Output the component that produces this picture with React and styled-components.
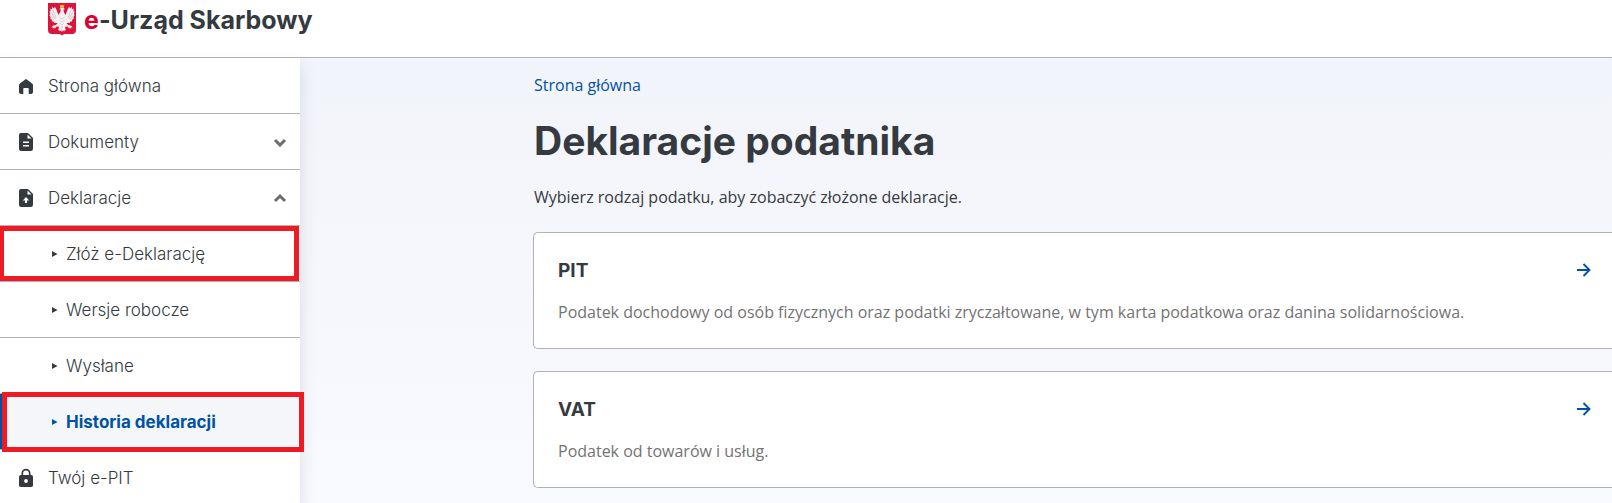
import React from "react";
import styled, { createGlobalStyle } from "styled-components";

const GlobalStyle = createGlobalStyle`
  * {
    box-sizing: border-box;
  }
  body {
    margin: 0;
    background-color: #f8faff;
    color: #343a40;
    font-family: "Open Sans", sans-serif;
    font-size: 16px;
    line-height: 24px;
    overflow-x: hidden;
  }
`;

const Header = styled.header`
  display: flex;
  align-items: flex-start;
  height: 58px;
  padding: 3px 48px;
  background-color: white;
  border-bottom: 1px solid #b3b3b3;
`;

const Brand = styled.a`
  display: flex;
  gap: 8px;
  color: #343a40;
  font-family: Inter, sans-serif;
  font-size: 25px;
  font-weight: 700;
  line-height: 34px;
  text-decoration: none;
`;

const BrandAccent = styled.span`
  color: #dc0032;
`;

const Layout = styled.div`
  display: flex;
  min-height: calc(100vh - 58px);
`;

const Sidebar = styled.nav`
  position: relative;
  flex: 0 0 300px;
  background-color: white;
  box-shadow: 0 8px 16px rgba(52, 58, 64, 0.14);
`;

const List = styled.ul`
  list-style: none;
  margin: 0;
  padding: 0;
`;

const Item = styled.li`
  position: relative;
  z-index: ${(props) => (props.$marked ? 1 : 0)};
  border-bottom: 1px solid #b3b3b3;
`;

const NavLink = styled.a`
  display: flex;
  align-items: center;
  gap: 11px;
  height: 55px;
  padding: 0 13px 0 15px;
  color: #343a40;
  font-family: Inter, sans-serif;
  font-size: 17px;
  font-weight: 300;
  text-decoration: none;
`;

const NavButton = styled(NavLink)`
  width: 100%;
  border: none;
  background: none;
  text-align: left;
  cursor: pointer;
`;

const SubLink = styled(NavLink)`
  gap: 6px;
  padding: 0 14px 0 ${(props) => (props.$active ? "42px" : "48px")};
  border-left: ${(props) => (props.$active ? "6px solid #0052a5" : "none")};
  background-color: ${(props) => (props.$active ? "#f5f6fa" : "white")};
  color: ${(props) => (props.$active ? "#0052a5" : "#343a40")};
  font-weight: ${(props) => (props.$active ? 700 : 300)};
`;

const NavLabel = styled.span`
  flex: 1;
`;

const Frame = styled.span`
  position: absolute;
  inset: ${(props) => props.$inset};
  border: 5px solid #ed1c24;
  pointer-events: none;
`;

const Main = styled.main`
  display: flex;
  flex: 1;
  flex-direction: column;
  gap: 22px;
  min-width: 0;
  padding: 15px 0 15px 233px;
  background: linear-gradient(#f1f4fa, #f5f6fb 160px, #f8faff);
`;

const Intro = styled.div`
  display: flex;
  flex-direction: column;
  gap: 22px;
  padding: 0 1px 1px;
`;

const Breadcrumb = styled.a`
  align-self: flex-start;
  color: #0052a5;
  text-decoration: none;
`;

const Title = styled.h1`
  margin: 0;
  font-family: Inter, sans-serif;
  font-size: 39px;
  font-weight: 700;
  line-height: 44px;
`;

const Lead = styled.p`
  margin: 0;
`;

const Card = styled.a`
  display: flex;
  justify-content: space-between;
  padding: 24px 17px 24px 24px;
  background-color: white;
  border: 1px solid #b3b3b3;
  border-right: none;
  border-radius: 5px 0 0 5px;
  color: #737373;
  text-decoration: none;
`;

const CardBody = styled.div`
  display: flex;
  flex-direction: column;
  gap: 16px;
`;

const CardTitle = styled.h2`
  margin: 0;
  color: #343a40;
  font-family: Inter, sans-serif;
  font-size: 19px;
  font-weight: 700;
  line-height: 27px;
`;

const CardText = styled.p`
  margin: 0;
`;

const Emblem = () => (
  <svg width="28" height="33" viewBox="0 0 28 33" aria-hidden="true">
    <path
      d="M0 0h28v27q0 4-4 4h-7q-2 0-3 1.6Q13 31 11 31H4q-4 0-4-4z"
      fill="#dc143c"
    />
    <g fill="#f6f1f2">
      <path d="M12 5.5q1.500-1.600 3.800-.7l1 1.500-1.400.2.6 3 1.600 2.500 2-5.400 1.500-2.800 1 2 1.400-2 .6 2.400 1.600-.7-.3 2.700 1.200.3-.8 2.500.8 1-1.200 2.200.4 1.400-1.600 1.200-.2 1.400-1.700.5-.5 1.300-1.800-.3-1.600.8 2 1.600 2.800.7 1.400 2-1.600-.6.2 1.500-1.500-1.100-.5 1.200-1.200-1.700-2.300-.8-.6 1.600 1 2.400-1.400-.3-.4 1.400-1.200-1.100-1.100 1.700-1.100-1.700-1.200 1.100-.4-1.400-1.400.3 1-2.400-.6-1.600-2.300.8-1.200 1.700-.5-1.200-1.500 1.100.2-1.500-1.600.6 1.400-2 2.800-.7 2-1.600-1.600-.8-1.800.3-.5-1.300-1.700-.5-.2-1.400-1.600-1.200.4-1.400-1.200-2.200.8-1-.8-2.500 1.200-.3-.3-2.700 1.600.7.6-2.400 1.400 2 1-2 1.500 2.800 2 5.400 1.600-2.500.8-2.500z" />
    </g>
    <g fill="none" stroke="#b9a5ac" strokeWidth=".5">
      <path d="M5 7l3 8M3.300 9l3.600 7M3 12.500l3 4.500M23 7l-3 8M24.700 9l-3.600 7M25 12.500L22 17M11.500 14l2.500 2 2.500-2M11.500 17l2.500 2 2.500-2M12 20l2 2 2-2M14 23v5" />
    </g>
    <g fill="#efc431">
      <path d="M11.700 1.600l1.100 1 1.200-1.200 1.200 1.200 1.100-1-.5 3.100h-3.600zM11 6l1.500-.4.1 1.200zM7.500 23l1.800-.5-.8 1.800zM20.500 23l-1.800-.5.8 1.800z" />
    </g>
  </svg>
);

const HomeIcon = () => (
  <svg width="22" height="22" viewBox="0 0 22 22" aria-hidden="true">
    <path
      d="M10.200 4.400q.8-.6 1.600 0l5.300 4q.9.7.9 1.700V17q0 2-2 2h-2.300v-5.300q0-.7-.7-.7H9q-.7 0-.7.700V19H6q-2 0-2-2v-6.900q0-1 .9-1.700z"
      fill="#343a40"
    />
  </svg>
);

const DocumentIcon = () => (
  <svg width="22" height="22" viewBox="0 0 22 22" aria-hidden="true">
    <path d="M6 2h7l5 5v10.500Q18 20 16 20H6q-2 0-2-2V4q0-2 2-2z" fill="#343a40" />
    <path d="M12.500 3.500V7.500h4zM8 10.500h6v1.500H8zM8 14h6v1.500H8z" fill="white" />
  </svg>
);

const UploadIcon = () => (
  <svg width="22" height="22" viewBox="0 0 22 22" aria-hidden="true">
    <path d="M6 2h7l5 5v10.500Q18 20 16 20H6q-2 0-2-2V4q0-2 2-2z" fill="#343a40" />
    <path
      d="M12.500 3.500V7.500h4zM11 10l3.200 3.500h-2.200V16h-2v-2.500H7.800z"
      fill="white"
    />
  </svg>
);

const LockIcon = () => (
  <svg width="22" height="22" viewBox="0 0 22 22" aria-hidden="true">
    <path d="M7.300 9V6.300a3.700 3.700 0 0 1 7.400 0V9" fill="none" stroke="#343a40" strokeWidth="1.700" />
    <rect x="4" y="8" width="14" height="12" rx="1.800" fill="#343a40" />
    <circle cx="11" cy="14" r="1.900" fill="white" />
  </svg>
);

const Chevron = ({ open }) => (
  <svg width="14" height="10" viewBox="0 0 14 10" aria-hidden="true">
    <path
      d={open ? "M2 8l5-5 5 5" : "M2 3l5 5 5-5"}
      fill="none"
      stroke="#6c6c6c"
      strokeWidth="3"
    />
  </svg>
);

const Triangle = () => (
  <svg width="12" height="8" viewBox="0 0 12 8" aria-hidden="true">
    <path d="M4 1l5.500 3L4 7z" fill="currentColor" />
  </svg>
);

const Arrow = () => (
  <svg width="20" height="26" viewBox="0 0 20 26" aria-hidden="true">
    <path d="M2 13h12M8.500 7l6 6-6 6" fill="none" stroke="#0052a5" strokeWidth="1.900" />
  </svg>
);

const submenu = [
  { label: "Złóż e-Deklarację", frame: "0 1px 0 -1px" },
  { label: "Wersje robocze" },
  { label: "Wysłane" },
  { label: "Historia deklaracji", frame: "-2px -4px -3px 2px", active: true },
];

const taxes = [
  {
    name: "PIT",
    text: "Podatek dochodowy od osób fizycznych oraz podatki zryczałtowane, w tym karta podatkowa oraz danina solidarnościowa.",
  },
  { name: "VAT", text: "Podatek od towarów i usług." },
];

export default function App() {
  return (
    <>
      <GlobalStyle />
      <Header>
        <Brand href="#">
          <Emblem />
          <span>
            <BrandAccent>e</BrandAccent>-Urząd Skarbowy
          </span>
        </Brand>
      </Header>
      <Layout>
        <Sidebar>
          <List>
            <Item>
              <NavLink href="#">
                <HomeIcon />
                <NavLabel>Strona główna</NavLabel>
              </NavLink>
            </Item>
            <Item>
              <NavButton as="button" type="button" aria-expanded="false">
                <DocumentIcon />
                <NavLabel>Dokumenty</NavLabel>
                <Chevron />
              </NavButton>
            </Item>
            <Item>
              <NavButton as="button" type="button" aria-expanded="true">
                <UploadIcon />
                <NavLabel>Deklaracje</NavLabel>
                <Chevron open />
              </NavButton>
            </Item>
            {submenu.map((item) => (
              <Item key={item.label} $marked={Boolean(item.frame)}>
                <SubLink href="#" $active={item.active}>
                  <Triangle />
                  <NavLabel>{item.label}</NavLabel>
                </SubLink>
                {item.frame && <Frame $inset={item.frame} />}
              </Item>
            ))}
            <Item>
              <NavLink href="#">
                <LockIcon />
                <NavLabel>Twój e-PIT</NavLabel>
              </NavLink>
            </Item>
          </List>
        </Sidebar>
        <Main>
          <Intro>
            <Breadcrumb href="#">Strona główna</Breadcrumb>
            <Title>Deklaracje podatnika</Title>
            <Lead>Wybierz rodzaj podatku, aby zobaczyć złożone deklaracje.</Lead>
          </Intro>
          {taxes.map((tax) => (
            <Card href="#" key={tax.name}>
              <CardBody>
                <CardTitle>{tax.name}</CardTitle>
                <CardText>{tax.text}</CardText>
              </CardBody>
              <Arrow />
            </Card>
          ))}
        </Main>
      </Layout>
    </>
  );
}
